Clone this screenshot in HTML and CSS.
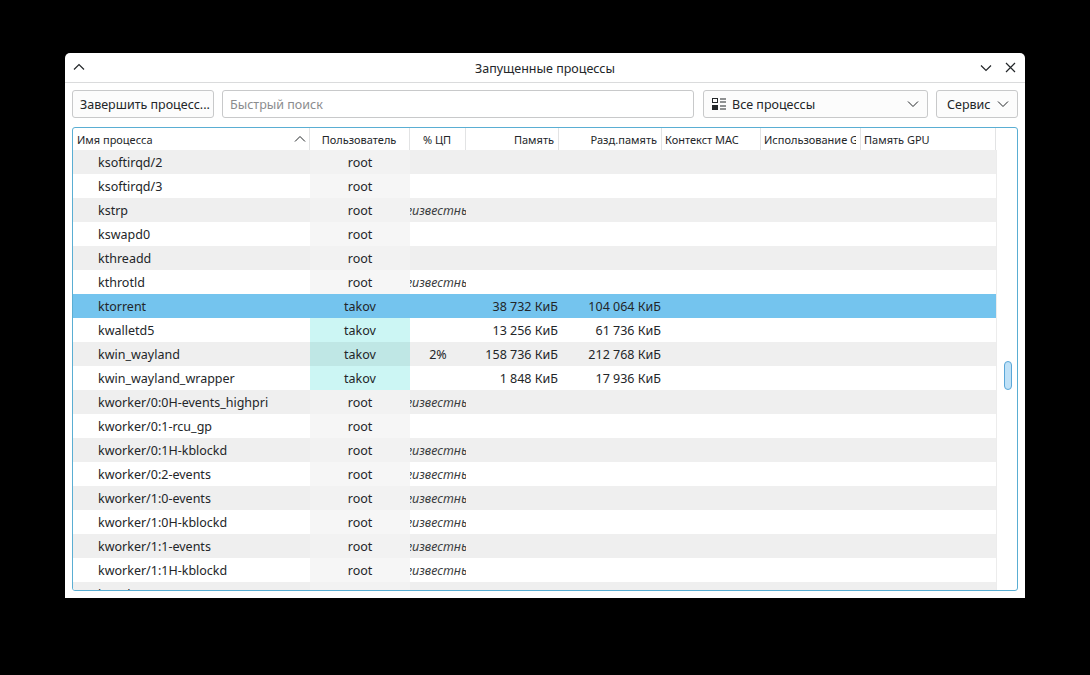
FILE: index.html
```html
<!DOCTYPE html>
<html lang="ru">
<head>
<meta charset="utf-8">
<title>Запущенные процессы</title>
<link rel="stylesheet" href="styles.css">
</head>
<body>
<div class="window">
  <div class="titlebar">
    <span class="tb-icon"><svg width="12" height="8" viewBox="0 0 12 8"><path d="M1 6.5 L6 1.5 L11 6.5" fill="none" stroke="#232629" stroke-width="1.2"/></svg></span>
    <span class="title">Запущенные процессы</span>
    <span class="tb-right">
      <svg width="12" height="8" viewBox="0 0 12 8"><path d="M1 1.5 L6 6.5 L11 1.5" fill="none" stroke="#232629" stroke-width="1.2"/></svg>
      <svg width="11" height="11" viewBox="0 0 11 11"><path d="M1 1 L10 10 M10 1 L1 10" fill="none" stroke="#232629" stroke-width="1.2"/></svg>
    </span>
  </div>
  <div class="toolbar">
    <button class="btn kill">Завершить процесс...</button>
    <div class="search">Быстрый поиск</div>
    <div class="combo">
      <svg class="list-ico" width="14" height="12" viewBox="0 0 14 12"><rect x="0.5" y="0.5" width="5" height="4" fill="none" stroke="#232629"/><rect x="0" y="7" width="6" height="5" fill="#232629"/><path d="M8 1h6M8 4h6M8 8h6M8 11h6" stroke="#232629" stroke-width="1"/></svg>
      <span class="combo-text">Все процессы</span>
      <svg class="chev" width="12" height="8" viewBox="0 0 12 8"><path d="M1 1.5 L6 6.5 L11 1.5" fill="none" stroke="#232629" stroke-width="1"/></svg>
    </div>
    <div class="combo service">
      <span class="combo-text">Сервис</span>
      <svg class="chev" width="12" height="8" viewBox="0 0 12 8"><path d="M1 1.5 L6 6.5 L11 1.5" fill="none" stroke="#232629" stroke-width="1"/></svg>
    </div>
  </div>
  <div class="frame">
    <div class="table">
      <div class="header">
        <div class="h name"><span>Имя процесса</span><svg class="sort" width="12" height="8" viewBox="0 0 12 8"><path d="M1 6.5 L6 1.5 L11 6.5" fill="none" stroke="#232629" stroke-width="1"/></svg></div>
        <div class="h c">Пользователь</div>
        <div class="h c">% ЦП</div>
        <div class="h r">Память</div>
        <div class="h r">Разд.память</div>
        <div class="h"><span class="clip">Контекст MAC</span></div>
        <div class="h"><span class="clip">Использование GPU</span></div>
        <div class="h"><span class="clip">Память GPU</span></div>
        <div class="h last"></div>
      </div>
      <div class="body">
        <div class="rows">
          <div class="row alt"><div class="name">ksoftirqd/2</div><div class="user root">root</div><div class="cpu"></div><div class="mem"></div><div class="shr"></div><div></div><div></div><div></div></div>
          <div class="row"><div class="name">ksoftirqd/3</div><div class="user root">root</div><div class="cpu"></div><div class="mem"></div><div class="shr"></div><div></div><div></div><div></div></div>
          <div class="row alt"><div class="name">kstrp</div><div class="user root">root</div><div class="cpu"><i>неизвестный</i></div><div class="mem"></div><div class="shr"></div><div></div><div></div><div></div></div>
          <div class="row"><div class="name">kswapd0</div><div class="user root">root</div><div class="cpu"></div><div class="mem"></div><div class="shr"></div><div></div><div></div><div></div></div>
          <div class="row alt"><div class="name">kthreadd</div><div class="user root">root</div><div class="cpu"></div><div class="mem"></div><div class="shr"></div><div></div><div></div><div></div></div>
          <div class="row"><div class="name">kthrotld</div><div class="user root">root</div><div class="cpu"><i>неизвестный</i></div><div class="mem"></div><div class="shr"></div><div></div><div></div><div></div></div>
          <div class="row sel"><div class="name">ktorrent</div><div class="user">takov</div><div class="cpu"></div><div class="mem">38&nbsp;732 КиБ</div><div class="shr">104&nbsp;064 КиБ</div><div></div><div></div><div></div></div>
          <div class="row"><div class="name">kwalletd5</div><div class="user me">takov</div><div class="cpu"></div><div class="mem">13&nbsp;256 КиБ</div><div class="shr">61&nbsp;736 КиБ</div><div></div><div></div><div></div></div>
          <div class="row alt"><div class="name">kwin_wayland</div><div class="user me">takov</div><div class="cpu">2%</div><div class="mem">158&nbsp;736 КиБ</div><div class="shr">212&nbsp;768 КиБ</div><div></div><div></div><div></div></div>
          <div class="row"><div class="name">kwin_wayland_wrapper</div><div class="user me">takov</div><div class="cpu"></div><div class="mem">1&nbsp;848 КиБ</div><div class="shr">17&nbsp;936 КиБ</div><div></div><div></div><div></div></div>
          <div class="row alt"><div class="name">kworker/0:0H-events_highpri</div><div class="user root">root</div><div class="cpu"><i>неизвестный</i></div><div class="mem"></div><div class="shr"></div><div></div><div></div><div></div></div>
          <div class="row"><div class="name">kworker/0:1-rcu_gp</div><div class="user root">root</div><div class="cpu"></div><div class="mem"></div><div class="shr"></div><div></div><div></div><div></div></div>
          <div class="row alt"><div class="name">kworker/0:1H-kblockd</div><div class="user root">root</div><div class="cpu"><i>неизвестный</i></div><div class="mem"></div><div class="shr"></div><div></div><div></div><div></div></div>
          <div class="row"><div class="name">kworker/0:2-events</div><div class="user root">root</div><div class="cpu"><i>неизвестный</i></div><div class="mem"></div><div class="shr"></div><div></div><div></div><div></div></div>
          <div class="row alt"><div class="name">kworker/1:0-events</div><div class="user root">root</div><div class="cpu"><i>неизвестный</i></div><div class="mem"></div><div class="shr"></div><div></div><div></div><div></div></div>
          <div class="row"><div class="name">kworker/1:0H-kblockd</div><div class="user root">root</div><div class="cpu"><i>неизвестный</i></div><div class="mem"></div><div class="shr"></div><div></div><div></div><div></div></div>
          <div class="row alt"><div class="name">kworker/1:1-events</div><div class="user root">root</div><div class="cpu"><i>неизвестный</i></div><div class="mem"></div><div class="shr"></div><div></div><div></div><div></div></div>
          <div class="row"><div class="name">kworker/1:1H-kblockd</div><div class="user root">root</div><div class="cpu"><i>неизвестный</i></div><div class="mem"></div><div class="shr"></div><div></div><div></div><div></div></div>
          <div class="row alt"><div class="name">kworker/2:0-events</div><div class="user root">root</div><div class="cpu"><i>неизвестный</i></div><div class="mem"></div><div class="shr"></div><div></div><div></div><div></div></div>
        </div>
        <div class="scrollbar"><div class="thumb"></div></div>
      </div>
    </div>
  </div>
</div>
</body>
</html>
```
FILE: styles.css
```css
html, body {
  margin: 0;
  padding: 0;
  background: #000;
}
body {
  width: 1090px;
  height: 675px;
  overflow: hidden;
  font-family: "Noto Sans", "Open Sans", sans-serif;
  color: #232629;
}
.window {
  margin: 53px 0 0 65px;
  width: 960px;
  height: 545px;
  background: #fff;
  border-radius: 5px 5px 0 0;
  display: flex;
  flex-direction: column;
}
.titlebar {
  height: 29px;
  border-bottom: 1px solid #dadbdc;
  display: grid;
  grid-template-columns: 1fr auto 1fr;
  align-items: center;
  font-size: 12.5px;
}
.tb-icon {
  margin-left: 8px;
  display: flex;
  margin-top: -2px;
}
.title {
  text-align: center;
  margin-top: 1px;
}
.tb-right {
  display: flex;
  align-items: center;
  justify-content: flex-end;
  gap: 13px;
  margin-right: 9px;
}
.toolbar {
  display: flex;
  align-items: center;
  padding: 7px 7px 0 7px;
  height: 28px;
}
.btn, .search, .combo {
  height: 28px;
  box-sizing: border-box;
  border: 1px solid #c8c9ca;
  border-radius: 3px;
  background: #fcfcfc;
  font-family: inherit;
  font-size: 12.5px;
  color: #232629;
  display: flex;
  align-items: center;
  white-space: nowrap;
}
.kill {
  width: 142px;
  padding: 0 0 0 7px;
  flex: none;
}
.search {
  width: 472px;
  margin-left: 8px;
  padding-left: 7px;
  color: #8b8c8e;
  background: #fff;
}
.combo {
  width: 225px;
  margin-left: 9px;
  padding: 0 8px 0 8px;
}
.list-ico {
  margin-right: 6px;
}
.combo-text {
  flex: 1;
}
.combo.service {
  width: 82px;
  margin-left: 8px;
  padding-left: 10px;
}
.frame {
  margin: 9px 7px 0 7px;
  height: 464px;
  box-sizing: border-box;
  border: 1px solid #5aaed3;
  border-radius: 3px;
  overflow: hidden;
}
.table {
  display: flex;
  flex-direction: column;
  height: 100%;
}
.header {
  display: grid;
  grid-template-columns: 237px 100px 56px 93px 103px 99px 100px 135px 21px;
  height: 22px;
  font-size: 11px;
  flex: none;
}
.h {
  border-right: 1px solid #e2e3e4;
  display: flex;
  align-items: center;
  padding: 0 4px 0 3px;
  white-space: nowrap;
  overflow: hidden;
  box-sizing: border-box;
}
.h .clip {
  overflow: hidden;
  min-width: 0;
}
.h.name {
  padding-left: 4px;
  justify-content: space-between;
  padding-right: 3px;
}
.h.c { justify-content: center; }
.h.r { justify-content: flex-end; }
.h.last { border-right: none; }
.body {
  display: flex;
  flex: 1;
  overflow: hidden;
}
.rows {
  width: 923px;
  overflow: hidden;
  border-right: 1px solid #ececec;
}
.row {
  display: grid;
  grid-template-columns: 237px 100px 56px 93px 103px 99px 100px 135px;
  height: 24px;
  font-size: 12.5px;
  background: #fff;
}
.row.alt { background: #efefef; }
.row.sel { background: #74c4ee; }
.row > div {
  display: flex;
  align-items: center;
  white-space: nowrap;
  overflow: hidden;
}
.row .name { padding-left: 25px; }
.row .user { justify-content: center; }
.row .user.root { background: #f6f6f6; }
.row.alt .user.root { background: #f2f2f2; }
.row .user.me { background: #ccf6f4; }
.row.alt .user.me { background: #bfe7e5; }
.row .cpu { justify-content: center; }
.row .cpu i { color: #3b3e41; flex: none; }
.row .mem, .row .shr { justify-content: flex-end; padding-right: 1px; }
.scrollbar {
  width: 20px;
  flex: none;
}
.thumb {
  margin: 211px 0 0 7px;
  width: 6px;
  height: 27px;
  border: 1px solid #5aa7d8;
  background: #bfe1f7;
  border-radius: 4px;
}
```
